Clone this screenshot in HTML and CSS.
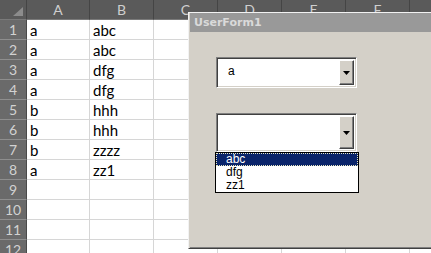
FILE: index.html
```html
<!DOCTYPE html>
<html>
<head>
    <title>UserForm1</title>
    <link rel="stylesheet" href="styles.css">
</head>
<body>

    <div class="sheet">
        <div class="corner">
            <svg width="10" height="9" viewBox="0 0 10 9"><polygon points="10,0 10,9 0,9" fill="#8c8c8c"/></svg>
        </div>
        <div class="colhead">A</div>
        <div class="colhead">B</div>
        <div class="colhead">C</div>
        <div class="colhead">D</div>
        <div class="colhead">E</div>
        <div class="colhead">F</div>
        <div class="colhead">G</div>

        <div class="rowhead">1</div><div class="cell">a</div><div class="cell">abc</div><div class="cell"></div><div class="cell"></div><div class="cell"></div><div class="cell"></div><div class="cell"></div>
        <div class="rowhead">2</div><div class="cell">a</div><div class="cell">abc</div><div class="cell"></div><div class="cell"></div><div class="cell"></div><div class="cell"></div><div class="cell"></div>
        <div class="rowhead">3</div><div class="cell">a</div><div class="cell">dfg</div><div class="cell"></div><div class="cell"></div><div class="cell"></div><div class="cell"></div><div class="cell"></div>
        <div class="rowhead">4</div><div class="cell">a</div><div class="cell">dfg</div><div class="cell"></div><div class="cell"></div><div class="cell"></div><div class="cell"></div><div class="cell"></div>
        <div class="rowhead">5</div><div class="cell">b</div><div class="cell">hhh</div><div class="cell"></div><div class="cell"></div><div class="cell"></div><div class="cell"></div><div class="cell"></div>
        <div class="rowhead">6</div><div class="cell">b</div><div class="cell">hhh</div><div class="cell"></div><div class="cell"></div><div class="cell"></div><div class="cell"></div><div class="cell"></div>
        <div class="rowhead">7</div><div class="cell">b</div><div class="cell">zzzz</div><div class="cell"></div><div class="cell"></div><div class="cell"></div><div class="cell"></div><div class="cell"></div>
        <div class="rowhead">8</div><div class="cell">a</div><div class="cell">zz1</div><div class="cell"></div><div class="cell"></div><div class="cell"></div><div class="cell"></div><div class="cell"></div>
        <div class="rowhead">9</div><div class="cell"></div><div class="cell"></div><div class="cell"></div><div class="cell"></div><div class="cell"></div><div class="cell"></div><div class="cell"></div>
        <div class="rowhead">10</div><div class="cell"></div><div class="cell"></div><div class="cell"></div><div class="cell"></div><div class="cell"></div><div class="cell"></div><div class="cell"></div>
        <div class="rowhead">11</div><div class="cell"></div><div class="cell"></div><div class="cell"></div><div class="cell"></div><div class="cell"></div><div class="cell"></div><div class="cell"></div>
        <div class="rowhead">12</div><div class="cell"></div><div class="cell"></div><div class="cell"></div><div class="cell"></div><div class="cell"></div><div class="cell"></div><div class="cell"></div>
    </div>

    <div class="userform">
        <div class="titlebar">UserForm1</div>
        <div class="formbody">
            <div class="combo combo-short">
                <span class="combo-text">a</span>
                <span class="drop-btn">
                    <svg width="7" height="4" viewBox="0 0 7 4"><polygon points="0,0 7,0 3.5,4" fill="#000"/></svg>
                </span>
            </div>
            <div class="combo combo-tall">
                <span class="combo-text"></span>
                <span class="drop-btn">
                    <svg width="7" height="4" viewBox="0 0 7 4"><polygon points="0,0 7,0 3.5,4" fill="#000"/></svg>
                </span>
                <ul class="droplist">
                    <li class="selected">abc</li>
                    <li>dfg</li>
                    <li>zz1</li>
                </ul>
            </div>
        </div>
    </div>

</body>
</html>
```

FILE: styles.css
```css
body {
    margin: 0;
    overflow: hidden;
    background: #fff;
    font-family: Lato, "Liberation Sans", sans-serif;
}
.sheet {
    display: grid;
    grid-template-columns: 27px 63px repeat(6, 64px);
    grid-template-rows: 20px repeat(12, 20px);
}
.sheet > div {
    box-sizing: border-box;
}
.corner {
    background: #5a5a5a;
    border-right: 1px solid #454545;
    border-bottom: 1px solid #7a7a7a;
    display: flex;
    align-items: flex-end;
    justify-content: flex-end;
    padding: 0 3px 3px 0;
}
.colhead {
    background: #5a5a5a;
    color: #cfcfcf;
    border-right: 1px solid #454545;
    border-bottom: 1px solid #7a7a7a;
    font-size: 14px;
    text-align: center;
    line-height: 19px;
}
.rowhead {
    background: #6a6a6a;
    color: #d2d2d2;
    border-right: 1px solid #4a4a4a;
    border-bottom: 1px solid #8e8e8e;
    font-size: 14px;
    text-align: center;
    line-height: 20px;
}
.cell {
    border-right: 1px solid #d6d6d6;
    border-bottom: 1px solid #d6d6d6;
    font-size: 15px;
    color: #000;
    padding-left: 3px;
    line-height: 20px;
}

.userform {
    position: absolute;
    left: 188px;
    top: 12px;
    width: 260px;
    height: 237px;
    background: #d4d0c8;
    border-top: 1px solid #f2f2f2;
    border-left: 1px solid #f2f2f2;
    border-bottom: 1px solid #404040;
    box-sizing: border-box;
    box-shadow: inset 1px 0 0 #d4d0c8, inset 0 -1px 0 #808080;
    font-family: "Liberation Sans", Arial, sans-serif;
}
.titlebar {
    margin-left: 1px;
    height: 19px;
    background: #999999;
    color: #dadada;
    font-family: "DejaVu Sans", sans-serif;
    font-weight: bold;
    font-size: 11px;
    line-height: 19px;
    padding-left: 4px;
}
.formbody {
    display: flex;
    flex-direction: column;
    align-items: flex-start;
    gap: 25px;
    padding: 25px 0 0 27px;
}
.combo {
    position: relative;
    display: flex;
    box-sizing: border-box;
    width: 141px;
    background: #fff;
    border-top: 1px solid #808080;
    border-left: 1px solid #808080;
    border-right: 1px solid #ffffff;
    border-bottom: 1px solid #ffffff;
    box-shadow: inset 1px 1px 0 #404040, inset -1px -1px 0 #d4d0c8;
    padding: 2px;
}
.combo-short {
    height: 31px;
}
.combo-tall {
    height: 39px;
}
.combo-text {
    flex: 1;
    font-size: 12px;
    padding: 4px 0 0 9px;
    color: #000;
}
.drop-btn {
    width: 15px;
    box-sizing: border-box;
    background: #d4d0c8;
    border-top: 1px solid #ffffff;
    border-left: 1px solid #ffffff;
    border-right: 1px solid #404040;
    border-bottom: 1px solid #404040;
    box-shadow: inset -1px -1px 0 #808080;
    display: flex;
    align-items: center;
    justify-content: center;
}
.droplist {
    position: absolute;
    top: 100%;
    left: -2px;
    width: 144px;
    box-sizing: border-box;
    margin: 1px 0 0 0;
    padding: 0;
    list-style: none;
    background: #fff;
    border: 1px solid #000;
}
.droplist li {
    height: 13px;
    line-height: 13px;
    font-size: 12px;
    padding-left: 10px;
    color: #000;
}
.droplist li.selected {
    background: #0a246a;
    color: #fff;
    outline: 1px dotted #e8e8c0;
    outline-offset: -1px;
}
```
